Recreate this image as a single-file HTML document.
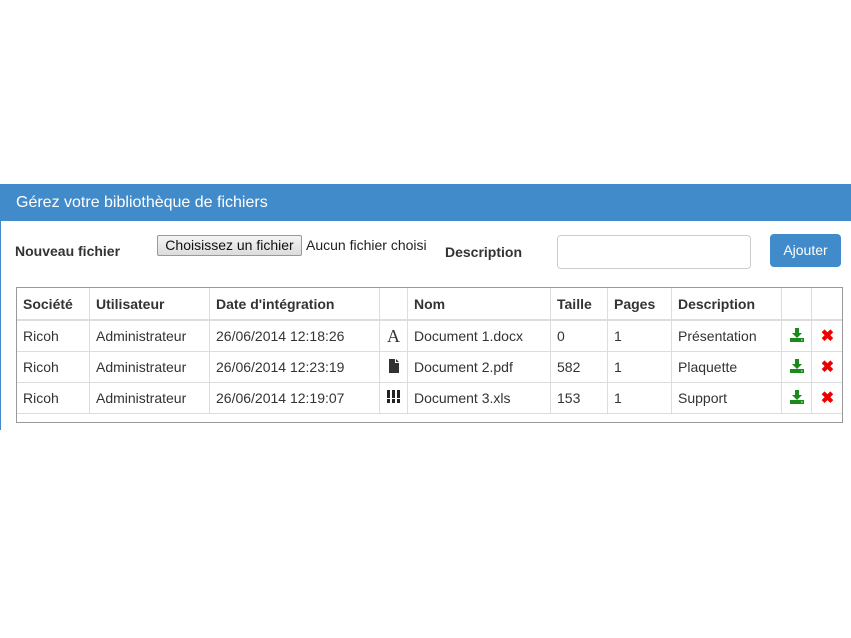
<!DOCTYPE html>
<html><head><meta charset="utf-8"><style>
body{margin:0;width:851px;height:638px;background:#fff;font-family:"Liberation Sans",Arial,sans-serif;font-size:14px;color:#333;position:relative;overflow:hidden}
.hdr{position:absolute;left:0;top:184px;width:851px;height:37px;background:#428bca;color:#fff;font-size:16px;line-height:37px;padding-left:16px;box-sizing:border-box}
.lb{position:absolute;left:0;top:184px;width:1px;height:246px;background:#428bca}
.abs{position:absolute}
.wrap{position:absolute;left:16px;top:287px;width:825px;height:134px;border:1px solid #999;overflow:hidden}
table{width:825px;border-collapse:collapse;table-layout:fixed;margin:-1px 0 0 -1px;width:827px}
td,th{border:1px solid #ddd;padding:0 6px;height:30px;text-align:left;white-space:nowrap;overflow:hidden}
th{height:31px;border-bottom:2px solid #ddd;font-weight:bold}
</style></head><body>
<div class="hdr">Gérez votre bibliothèque de fichiers</div>
<div class="lb"></div>
<div class="abs" style="left:15px;top:243px;font-weight:bold;font-size:14px">Nouveau fichier</div>
<div class="abs" style="left:157px;top:235px;width:143px;height:19px;border:1px solid #999;border-radius:2px;background:linear-gradient(#f4f4f4,#dcdcdc);font-size:14px;line-height:19px;text-align:center;color:#111">Choisissez un fichier</div>
<div class="abs" style="left:306px;top:237px;font-size:14px;color:#222">Aucun fichier choisi</div>
<div class="abs" style="left:445px;top:244px;font-weight:bold">Description</div>
<div class="abs" style="left:557px;top:235px;width:192px;height:32px;border:1px solid #ccc;border-radius:4px"></div>
<div class="abs" style="left:770px;top:234px;width:71px;height:33px;background:#428bca;border-radius:4px;color:#fff;line-height:33px;text-align:center;font-size:14px">Ajouter</div>
<div class="wrap">
<table>
<colgroup><col style="width:73px"><col style="width:120px"><col style="width:170px"><col style="width:28px"><col style="width:143px"><col style="width:57px"><col style="width:64px"><col style="width:110px"><col style="width:30px"><col style="width:32px"></colgroup>
<tr><th>Société</th><th>Utilisateur</th><th>Date d'intégration</th><th></th><th>Nom</th><th>Taille</th><th>Pages</th><th>Description</th><th></th><th></th></tr>
<tr><td>Ricoh</td><td>Administrateur</td><td>26/06/2014 12:18:26</td><td style="font-family:'Liberation Serif',serif;font-size:18px;text-align:center;padding:0">A</td><td>Document 1.docx</td><td>0</td><td>1</td><td>Présentation</td><td style="text-align:center;padding:0"><svg width="14" height="14" viewBox="0 0 14 14"><path d="M5 0h4v5h3l-5 5-5-5h3z" fill="#1a8a1a"/><rect x="0" y="10" width="14" height="4" fill="#1a8a1a"/><rect x="11" y="11.5" width="1.5" height="1" fill="#fff"/></svg></td><td style="text-align:center;padding:0;color:#e00;font-weight:bold;font-size:16px">✖</td></tr>
<tr><td>Ricoh</td><td>Administrateur</td><td>26/06/2014 12:23:19</td><td style="text-align:center;padding:0"><svg width="10" height="14" viewBox="0 0 10 14"><path d="M0 0h6v4h4v10H0z M7 0l3 3H7z" fill="#333"/></svg></td><td>Document 2.pdf</td><td>582</td><td>1</td><td>Plaquette</td><td style="text-align:center;padding:0"><svg width="14" height="14" viewBox="0 0 14 14"><path d="M5 0h4v5h3l-5 5-5-5h3z" fill="#1a8a1a"/><rect x="0" y="10" width="14" height="4" fill="#1a8a1a"/><rect x="11" y="11.5" width="1.5" height="1" fill="#fff"/></svg></td><td style="text-align:center;padding:0;color:#e00;font-weight:bold;font-size:16px">✖</td></tr>
<tr><td>Ricoh</td><td>Administrateur</td><td>26/06/2014 12:19:07</td><td style="text-align:center;padding:0"><svg width="13" height="13" viewBox="0 0 13 13"><g fill="#222"><rect x="0" y="0" width="3" height="13"/><rect x="5" y="0" width="3" height="13"/><rect x="10" y="0" width="3" height="13"/></g><rect x="0" y="8" width="13" height="1" fill="#fff"/></svg></td><td>Document 3.xls</td><td>153</td><td>1</td><td>Support</td><td style="text-align:center;padding:0"><svg width="14" height="14" viewBox="0 0 14 14"><path d="M5 0h4v5h3l-5 5-5-5h3z" fill="#1a8a1a"/><rect x="0" y="10" width="14" height="4" fill="#1a8a1a"/><rect x="11" y="11.5" width="1.5" height="1" fill="#fff"/></svg></td><td style="text-align:center;padding:0;color:#e00;font-weight:bold;font-size:16px">✖</td></tr>
</table>
</div>
</body></html>
